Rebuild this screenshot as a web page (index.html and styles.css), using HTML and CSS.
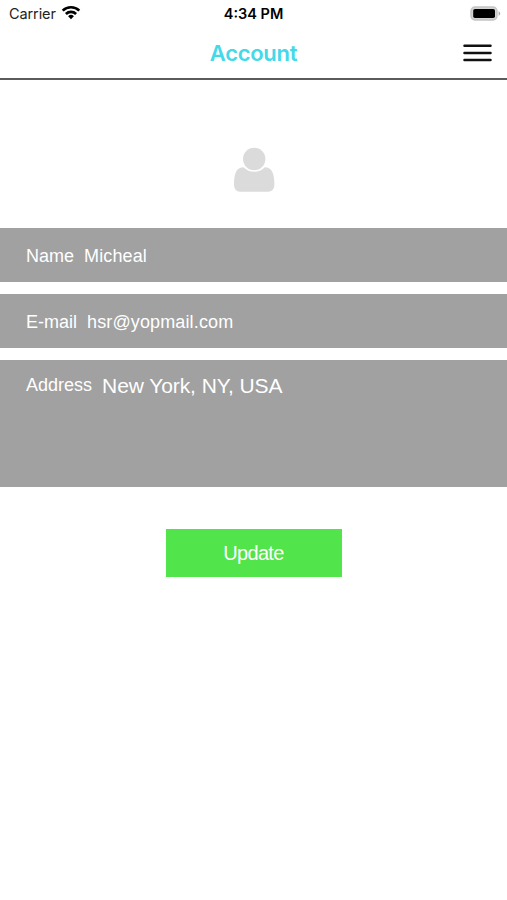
FILE: index.html
```html
<!doctype html>
<html lang="en">
  <head>
    <meta charset="UTF-8" />
    <meta name="viewport" content="width=device-width, initial-scale=1.0" />
    <title>Account</title>
    <link rel="stylesheet" href="styles.css" />
  </head>
  <body>
    <div class="status-bar">
      <div class="carrier">
        <span class="carrier-name">Carrier</span>
        <svg class="wifi" width="20" height="15" viewBox="0 0 20 15">
          <g fill="none" stroke="#000" stroke-width="2.7">
            <path d="M1.7 5.6a12 12 0 0 1 16.6 0" />
            <path d="M4.9 9a7.4 7.4 0 0 1 10.2 0" />
          </g>
          <path d="M10 14.2l-2.9-2.9a4.1 4.1 0 0 1 5.8 0z" />
        </svg>
      </div>
      <span class="time">4:34 PM</span>
      <svg class="battery" width="31" height="15" viewBox="0 0 31 15">
        <rect x="1" y="1" width="26" height="13" rx="4" fill="#d4d4d4" stroke="#c4c4c4" stroke-width="1.4" />
        <rect x="3.2" y="3" width="21.8" height="9" rx="1.8" />
        <path d="M28.6 5.3c2.1.8 2.1 3.7 0 4.5z" fill="#aaa" />
      </svg>
    </div>

    <header class="header">
      <h1 class="title">Account</h1>
      <button class="menu" aria-label="Menu">
        <svg width="29" height="20" viewBox="0 0 29 20" stroke="#111" stroke-width="2.5" stroke-linecap="round">
          <path d="M1.5 2.7h26M1.5 9.9h26M1.5 17.1h26" />
        </svg>
      </button>
    </header>

    <main>
      <svg class="avatar" width="42" height="46" viewBox="0 0 42 46" fill="#dbdbdb">
        <circle cx="21.2" cy="12" r="11.2" />
        <path d="M10.5 20.2C3.5 20.2 1 26.5 1 37.5C1 41.8 3.3 44.7 7.2 44.7H35.2C39.1 44.7 41.4 41.8 41.4 37.5C41.4 26.5 38.9 20.2 31.9 20.2C28.7 23.3 25.2 24.8 21.2 24.8S13.7 23.3 10.5 20.2Z" />
      </svg>

      <div class="fields">
        <div class="field">
          <span>Name</span>
          <span class="value">Micheal</span>
        </div>
        <div class="field">
          <span>E-mail</span>
          <span class="value">hsr@yopmail.com</span>
        </div>
        <div class="field field-address">
          <span>Address</span>
          <span class="address">New York, NY, USA</span>
        </div>
      </div>

      <button class="update">Update</button>
    </main>
  </body>
</html>
```
FILE: styles.css
```css
* {
  box-sizing: border-box;
}

body {
  margin: 0;
  min-height: 100vh;
  background: #fff;
  font-family: "Liberation Sans", Arial, sans-serif;
}

button {
  padding: 0;
  border: 0;
  border-radius: 0;
  background: none;
}

.status-bar {
  display: grid;
  grid-template-columns: 1fr auto 1fr;
  align-items: center;
  height: 27px;
  padding: 0 6px 0 9px;
  font: 14.5px/27px Inter, sans-serif;
}

.carrier {
  display: flex;
  align-items: center;
  gap: 5px;
  color: #222;
}

.carrier-name {
  letter-spacing: -0.1px;
}

.wifi {
  margin-top: -2px;
}

.time {
  margin-right: 3px;
  font-weight: 600;
}

.battery {
  justify-self: end;
}

.header {
  display: grid;
  grid-template-columns: 1fr auto 1fr;
  align-items: center;
  height: 53px;
  padding-right: 15px;
  border-bottom: 2px solid #5c5c5c;
}

.title {
  grid-column: 2;
  margin: 1px 0 0 15px;
  color: #43d9e8;
  font: 600 22px/50px Inter, sans-serif;
  letter-spacing: -0.3px;
}

.menu {
  display: flex;
  justify-self: end;
}

main {
  display: flex;
  flex-direction: column;
  align-items: center;
  padding-top: 67px;
}

.fields {
  display: flex;
  flex-direction: column;
  gap: 12px;
  width: 100%;
  margin-top: 35px;
}

.field {
  display: flex;
  align-items: center;
  gap: 10px;
  height: 54px;
  padding: 2px 26px 0;
  background: #a1a1a1;
  color: #fff;
  font-size: 18px;
}

.value {
  letter-spacing: 0.13px;
}

.field-address {
  align-items: flex-start;
  height: 127px;
  padding-top: 15px;
}

.address {
  margin-top: -1px;
  font-size: 21px;
  letter-spacing: -0.08px;
}

.update {
  width: 176px;
  height: 48px;
  margin-top: 42px;
  padding-top: 1px;
  background: #51e44b;
  color: #fff;
  font: 20px "Liberation Sans", Arial, sans-serif;
  letter-spacing: -0.7px;
}
```
